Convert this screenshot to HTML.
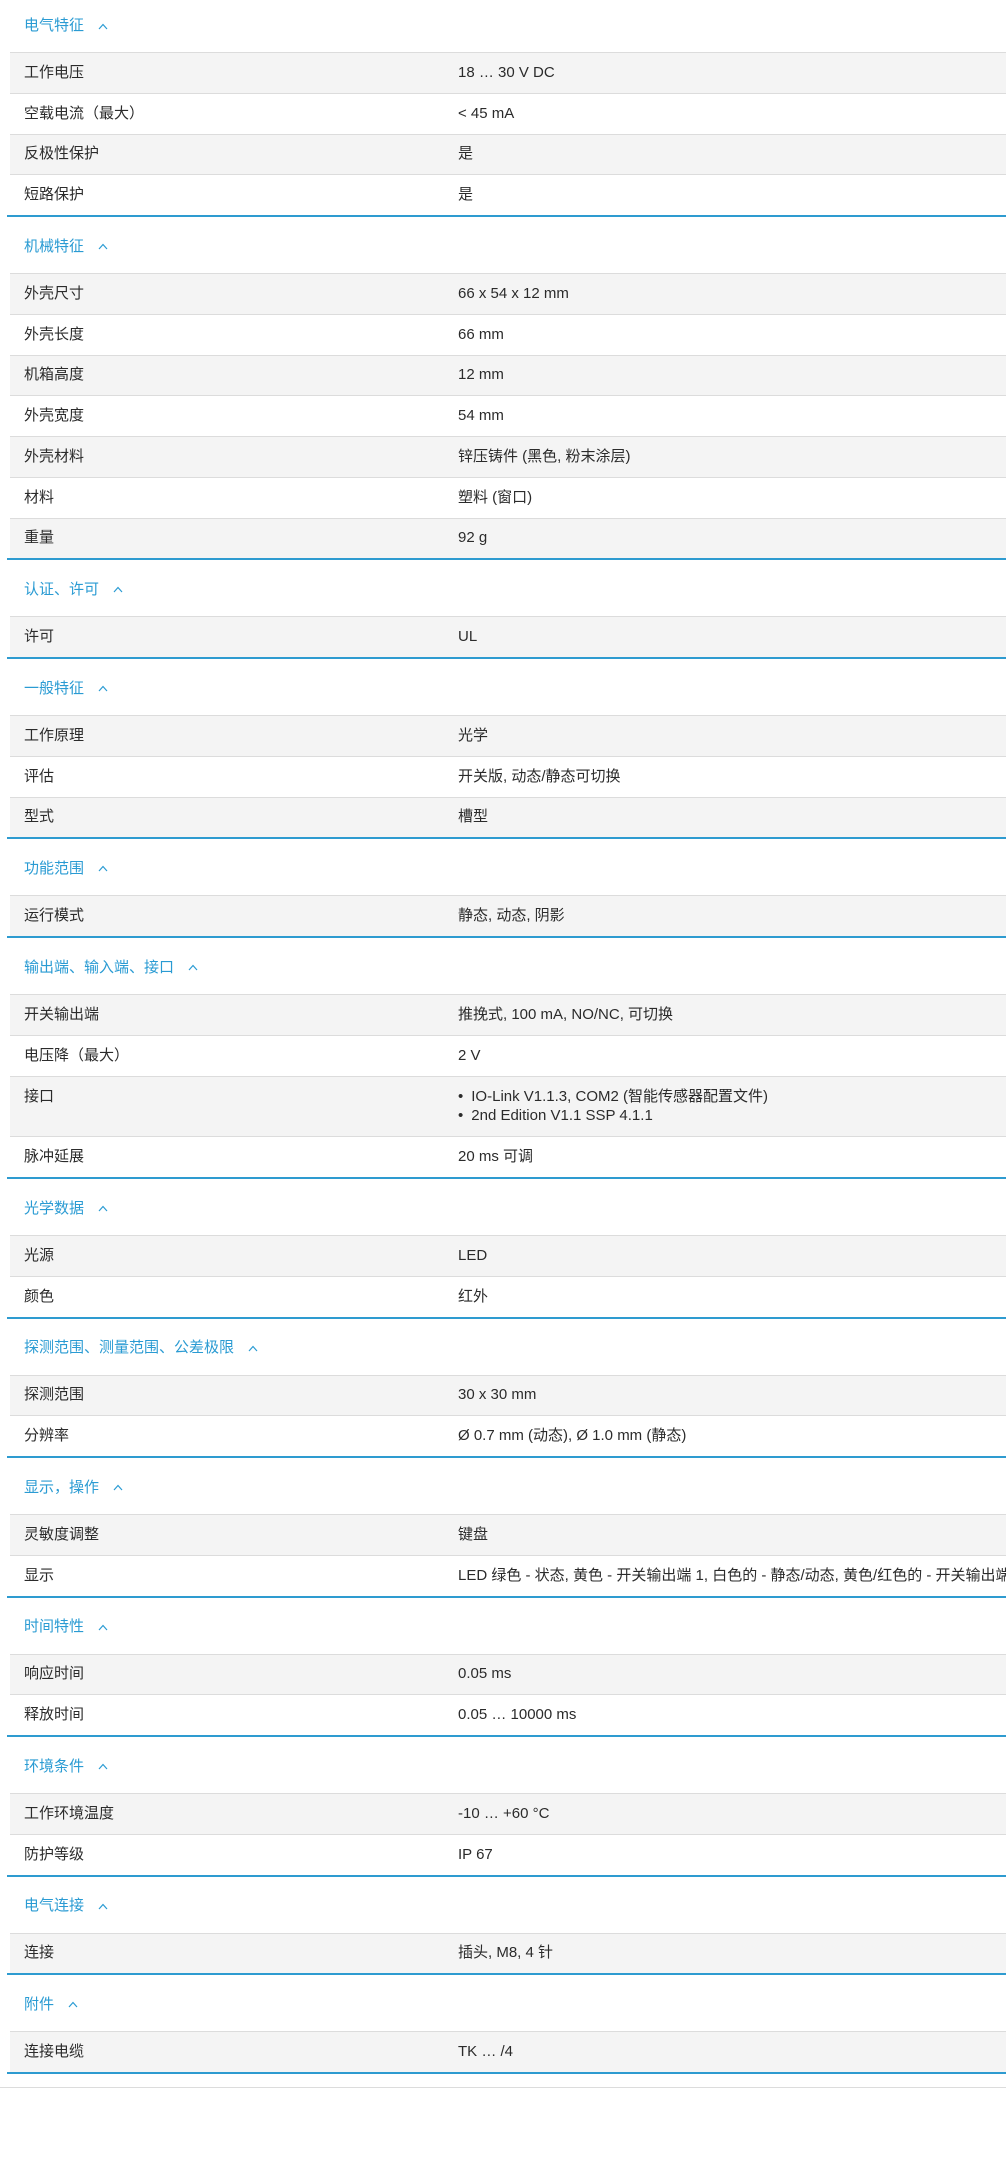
<!DOCTYPE html>
<html><head><meta charset="utf-8"><style>
*{margin:0;padding:0;box-sizing:border-box}
body{width:1006px;height:2163px;background:#fff;font-family:"Liberation Sans","Noto Sans CJK SC",sans-serif;font-size:15px;color:#2b2b2b;overflow:hidden}
.h{margin-left:7px;height:58px;border-top:2px solid #2e9bd0;display:flex;align-items:center;padding-left:17px;padding-top:3px;color:#2a9bd3;font-size:15px;line-height:20px}
.h.first{border-top:none;height:52px;padding-top:0}
.h svg{margin-left:14px}
.r{margin-left:10px;height:40.75px;border-top:1px solid #dcdcdc;display:flex;align-items:center;white-space:nowrap;overflow:hidden;line-height:20px}
.r:nth-child(even){background:#f4f4f4}
.r .k{width:448px;padding-left:14px;flex:none;display:block;line-height:20px}
.r .v{flex:none;display:block;line-height:20px}
.r.tall{height:60.75px;align-items:flex-start;padding-top:10px}
.r ul{list-style:none}
.r li{line-height:19px}
.r li:before{content:"•";margin-right:8px}
.end{border-top:2px solid #2e9bd0;margin-left:7px;height:15px}
.gl{border-top:1px solid #dcdcdc}
</style></head><body>
<div class="sec"><div class="h first">电气特征<svg width="10" height="7"><polyline points="1,6 5,1.5 9,6" fill="none" stroke="#2a9bd3" stroke-width="1.2"/></svg></div>
<div class="r"><span class="k">工作电压</span><span class="v">18 … 30 V DC</span></div>
<div class="r"><span class="k">空载电流（最大）</span><span class="v">&lt; 45 mA</span></div>
<div class="r"><span class="k">反极性保护</span><span class="v">是</span></div>
<div class="r"><span class="k">短路保护</span><span class="v">是</span></div></div>
<div class="sec"><div class="h">机械特征<svg width="10" height="7"><polyline points="1,6 5,1.5 9,6" fill="none" stroke="#2a9bd3" stroke-width="1.2"/></svg></div>
<div class="r"><span class="k">外壳尺寸</span><span class="v">66 x 54 x 12 mm</span></div>
<div class="r"><span class="k">外壳长度</span><span class="v">66 mm</span></div>
<div class="r"><span class="k">机箱高度</span><span class="v">12 mm</span></div>
<div class="r"><span class="k">外壳宽度</span><span class="v">54 mm</span></div>
<div class="r"><span class="k">外壳材料</span><span class="v">锌压铸件 (黑色, 粉末涂层)</span></div>
<div class="r"><span class="k">材料</span><span class="v">塑料 (窗口)</span></div>
<div class="r"><span class="k">重量</span><span class="v">92 g</span></div></div>
<div class="sec"><div class="h">认证、许可<svg width="10" height="7"><polyline points="1,6 5,1.5 9,6" fill="none" stroke="#2a9bd3" stroke-width="1.2"/></svg></div>
<div class="r"><span class="k">许可</span><span class="v">UL</span></div></div>
<div class="sec"><div class="h">一般特征<svg width="10" height="7"><polyline points="1,6 5,1.5 9,6" fill="none" stroke="#2a9bd3" stroke-width="1.2"/></svg></div>
<div class="r"><span class="k">工作原理</span><span class="v">光学</span></div>
<div class="r"><span class="k">评估</span><span class="v">开关版, 动态/静态可切换</span></div>
<div class="r"><span class="k">型式</span><span class="v">槽型</span></div></div>
<div class="sec"><div class="h">功能范围<svg width="10" height="7"><polyline points="1,6 5,1.5 9,6" fill="none" stroke="#2a9bd3" stroke-width="1.2"/></svg></div>
<div class="r"><span class="k">运行模式</span><span class="v">静态, 动态, 阴影</span></div></div>
<div class="sec"><div class="h">输出端、输入端、接口<svg width="10" height="7"><polyline points="1,6 5,1.5 9,6" fill="none" stroke="#2a9bd3" stroke-width="1.2"/></svg></div>
<div class="r"><span class="k">开关输出端</span><span class="v">推挽式, 100 mA, NO/NC, 可切换</span></div>
<div class="r"><span class="k">电压降（最大）</span><span class="v">2 V</span></div>
<div class="r tall"><span class="k">接口</span><span class="v"><ul><li>IO-Link V1.1.3, COM2 (智能传感器配置文件)</li><li>2nd Edition V1.1 SSP 4.1.1</li></ul></span></div>
<div class="r"><span class="k">脉冲延展</span><span class="v">20 ms 可调</span></div></div>
<div class="sec"><div class="h">光学数据<svg width="10" height="7"><polyline points="1,6 5,1.5 9,6" fill="none" stroke="#2a9bd3" stroke-width="1.2"/></svg></div>
<div class="r"><span class="k">光源</span><span class="v">LED</span></div>
<div class="r"><span class="k">颜色</span><span class="v">红外</span></div></div>
<div class="sec"><div class="h">探测范围、测量范围、公差极限<svg width="10" height="7"><polyline points="1,6 5,1.5 9,6" fill="none" stroke="#2a9bd3" stroke-width="1.2"/></svg></div>
<div class="r"><span class="k">探测范围</span><span class="v">30 x 30 mm</span></div>
<div class="r"><span class="k">分辨率</span><span class="v">Ø 0.7 mm (动态), Ø 1.0 mm (静态)</span></div></div>
<div class="sec"><div class="h">显示，操作<svg width="10" height="7"><polyline points="1,6 5,1.5 9,6" fill="none" stroke="#2a9bd3" stroke-width="1.2"/></svg></div>
<div class="r"><span class="k">灵敏度调整</span><span class="v">键盘</span></div>
<div class="r"><span class="k">显示</span><span class="v">LED 绿色 - 状态, 黄色 - 开关输出端 1, 白色的 - 静态/动态, 黄色/红色的 - 开关输出端 2</span></div></div>
<div class="sec"><div class="h">时间特性<svg width="10" height="7"><polyline points="1,6 5,1.5 9,6" fill="none" stroke="#2a9bd3" stroke-width="1.2"/></svg></div>
<div class="r"><span class="k">响应时间</span><span class="v">0.05 ms</span></div>
<div class="r"><span class="k">释放时间</span><span class="v">0.05 … 10000 ms</span></div></div>
<div class="sec"><div class="h">环境条件<svg width="10" height="7"><polyline points="1,6 5,1.5 9,6" fill="none" stroke="#2a9bd3" stroke-width="1.2"/></svg></div>
<div class="r"><span class="k">工作环境温度</span><span class="v">-10 … +60 °C</span></div>
<div class="r"><span class="k">防护等级</span><span class="v">IP 67</span></div></div>
<div class="sec"><div class="h">电气连接<svg width="10" height="7"><polyline points="1,6 5,1.5 9,6" fill="none" stroke="#2a9bd3" stroke-width="1.2"/></svg></div>
<div class="r"><span class="k">连接</span><span class="v">插头, M8, 4 针</span></div></div>
<div class="sec"><div class="h">附件<svg width="10" height="7"><polyline points="1,6 5,1.5 9,6" fill="none" stroke="#2a9bd3" stroke-width="1.2"/></svg></div>
<div class="r"><span class="k">连接电缆</span><span class="v">TK … /4</span></div></div>
<div class="end"></div>
<div class="gl"></div>
</body></html>
